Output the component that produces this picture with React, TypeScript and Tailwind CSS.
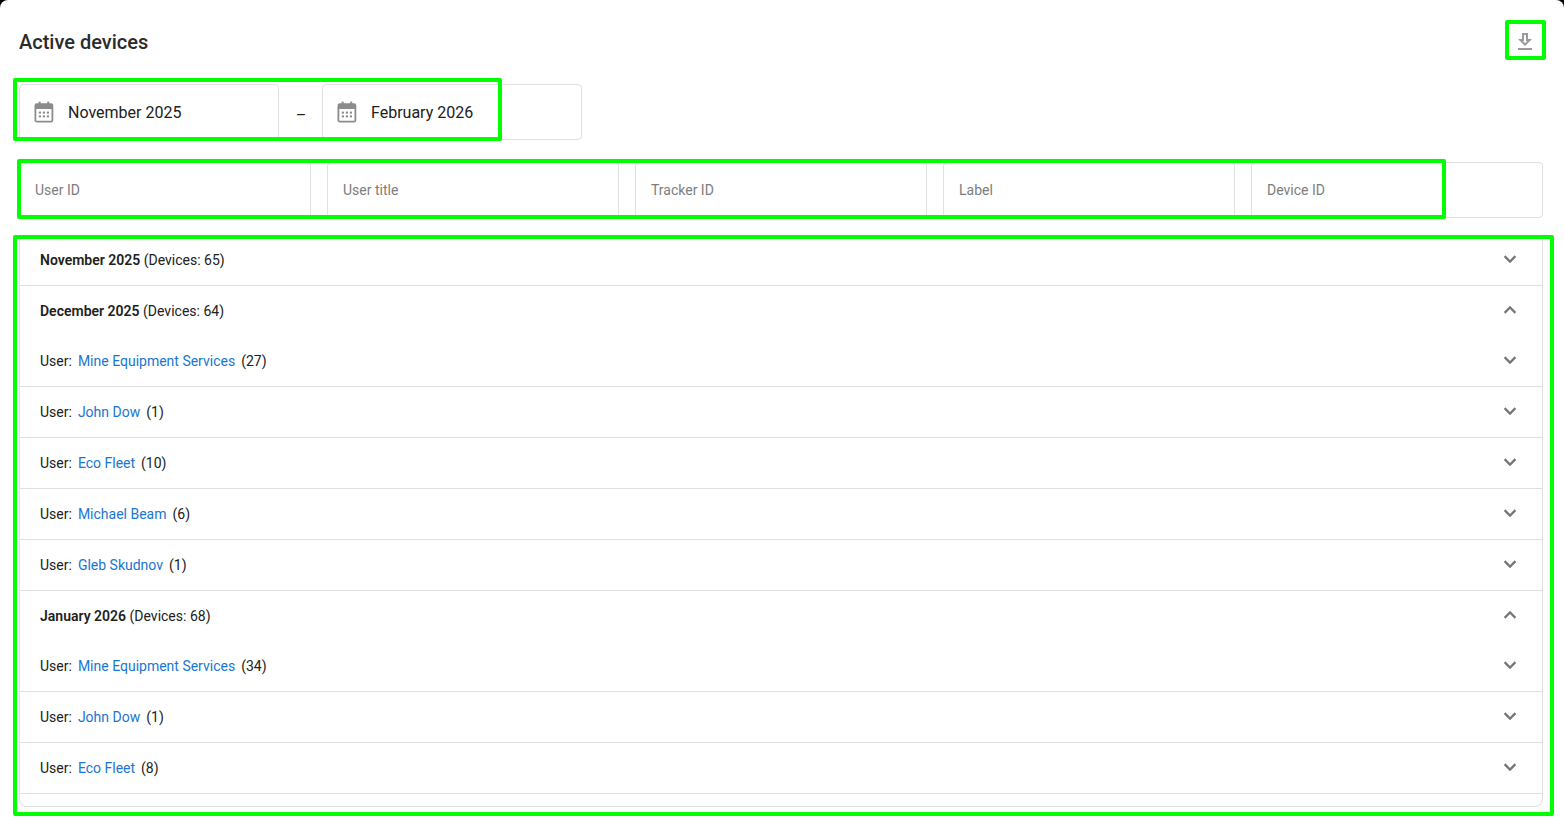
import React from "react";

const CalendarIcon = () => (
  <svg width="20" height="22" viewBox="0 0 20 22" fill="none" className="text-[#8c8c8c] shrink-0">
    <rect x="1.4" y="3.2" width="17" height="17.4" rx="1.4" stroke="currentColor" strokeWidth="1.8" />
    <rect x="1.4" y="3.2" width="17" height="4.8" fill="currentColor" />
    <rect x="4.6" y="0.6" width="2" height="3.5" fill="currentColor" />
    <rect x="13.2" y="0.6" width="2" height="3.5" fill="currentColor" />
    <g fill="currentColor">
      <rect x="4.8" y="10.6" width="2.2" height="2" />
      <rect x="8.8" y="10.6" width="2.2" height="2" />
      <rect x="12.8" y="10.6" width="2.2" height="2" />
      <rect x="4.8" y="14.4" width="2.2" height="2" />
      <rect x="8.8" y="14.4" width="2.2" height="2" />
      <rect x="12.8" y="14.4" width="2.2" height="2" />
    </g>
  </svg>
);

const DownloadIcon = () => (
  <svg width="24" height="24" viewBox="0 0 24 24" fill="#9a9a9a">
    <path d="M5 20h14v-2H5v2zM19 9h-4V3H9v6H5l7 7 7-7zm-8 2V5h2v6h1.17L12 13.17 9.83 11H11z" />
  </svg>
);

const Chevron = ({ up }: { up?: boolean }) => (
  <svg width="24" height="24" viewBox="0 0 24 24" fill="#757575" stroke="#757575" strokeWidth="0.4" className={`-mt-[2px] ${up ? "rotate-180" : ""}`}>
    <path d="M16.59 8.59 12 13.17 7.41 8.59 6 10l6 6 6-6z" />
  </svg>
);

function DateField({ value }: { value: string }) {
  return (
    <div className="w-[260px] h-[56px] border border-[#e0e0e0] rounded flex items-center pl-[14px] gap-[14px] text-[16px] text-[#212121]">
      <CalendarIcon />
      <span className="pt-[2px]">{value}</span>
    </div>
  );
}

function MonthRow({ month, count, open }: { month: string; count: number; open?: boolean }) {
  return (
    <div className={`flex items-center justify-between pl-[20px] pr-[20px] text-[14px] text-[#212121] ${open ? "h-[50px]" : "border-b border-[#e0e0e0] h-[51px]"}`}>
      <div>
        <span className="font-semibold">{month}</span> (Devices: {count})
      </div>
      <Chevron up={open} />
    </div>
  );
}

function UserRow({ name, count }: { name: string; count: number }) {
  return (
    <div className="flex items-center justify-between pl-[20px] pr-[20px] h-[51px] border-b border-[#e0e0e0] text-[14px] text-[#212121]">
      <div className="flex gap-[6px]">
        <span>User:</span>
        <span className="text-[#1976d2]">{name}</span>
        <span>({count})</span>
      </div>
      <Chevron />
    </div>
  );
}

const filters = ["User ID", "User title", "Tracker ID", "Label", "Device ID"];

export default function App() {
  return (
    <div className="h-[828px] w-[1564px] bg-black overflow-hidden relative font-['Roboto',sans-serif]">
      <div className="h-full bg-white rounded-t-[8px] pl-[19px] pr-[21px]">
        <div className="h-[84px] flex items-center justify-between pr-[6px]">
          <h1 className="text-[20px] font-medium text-[#2b2b2b]">Active devices</h1>
          <button className="w-[24px] h-[24px]">
            <DownloadIcon />
          </button>
        </div>

        <div className="flex items-center">
          <DateField value="November 2025" />
          <div className="w-[43px] text-center text-[16px] text-[#212121] pt-[8px] pl-px">–</div>
          <DateField value="February 2026" />
        </div>

        <div className="grid grid-cols-5 gap-4 mt-[22px]">
          {filters.map((f) => (
            <div key={f} className="h-[56px] border border-[#e0e0e0] rounded flex items-center pl-[15px] text-[14px] text-[#7d7d7d]">
              {f}
            </div>
          ))}
        </div>

        <div className="mt-[17px] border-x border-b border-[#e0e0e0] rounded-b-lg pb-[12px]">
          <MonthRow month="November 2025" count={65} />
          <MonthRow month="December 2025" count={64} open />
          <UserRow name="Mine Equipment Services" count={27} />
          <UserRow name="John Dow" count={1} />
          <UserRow name="Eco Fleet" count={10} />
          <UserRow name="Michael Beam" count={6} />
          <UserRow name="Gleb Skudnov" count={1} />
          <MonthRow month="January 2026" count={68} open />
          <UserRow name="Mine Equipment Services" count={34} />
          <UserRow name="John Dow" count={1} />
          <UserRow name="Eco Fleet" count={8} />
        </div>
      </div>

      {/* green highlight boxes drawn over the page */}
      <div className="absolute left-[1505px] top-[20px] w-[41px] h-[40px] border-[4px] border-[#00ff00] rounded-[2px]" />
      <div className="absolute left-[13px] top-[78px] w-[489px] h-[63px] border-[4px] border-[#00ff00] rounded-[2px]" />
      <div className="absolute left-[17px] top-[159px] w-[1429px] h-[60px] border-[4px] border-[#00ff00] rounded-[2px]" />
      <div className="absolute left-[13px] top-[235px] w-[1541px] h-[581px] border-[4px] border-[#00ff00] rounded-[2px]" />
    </div>
  );
}
